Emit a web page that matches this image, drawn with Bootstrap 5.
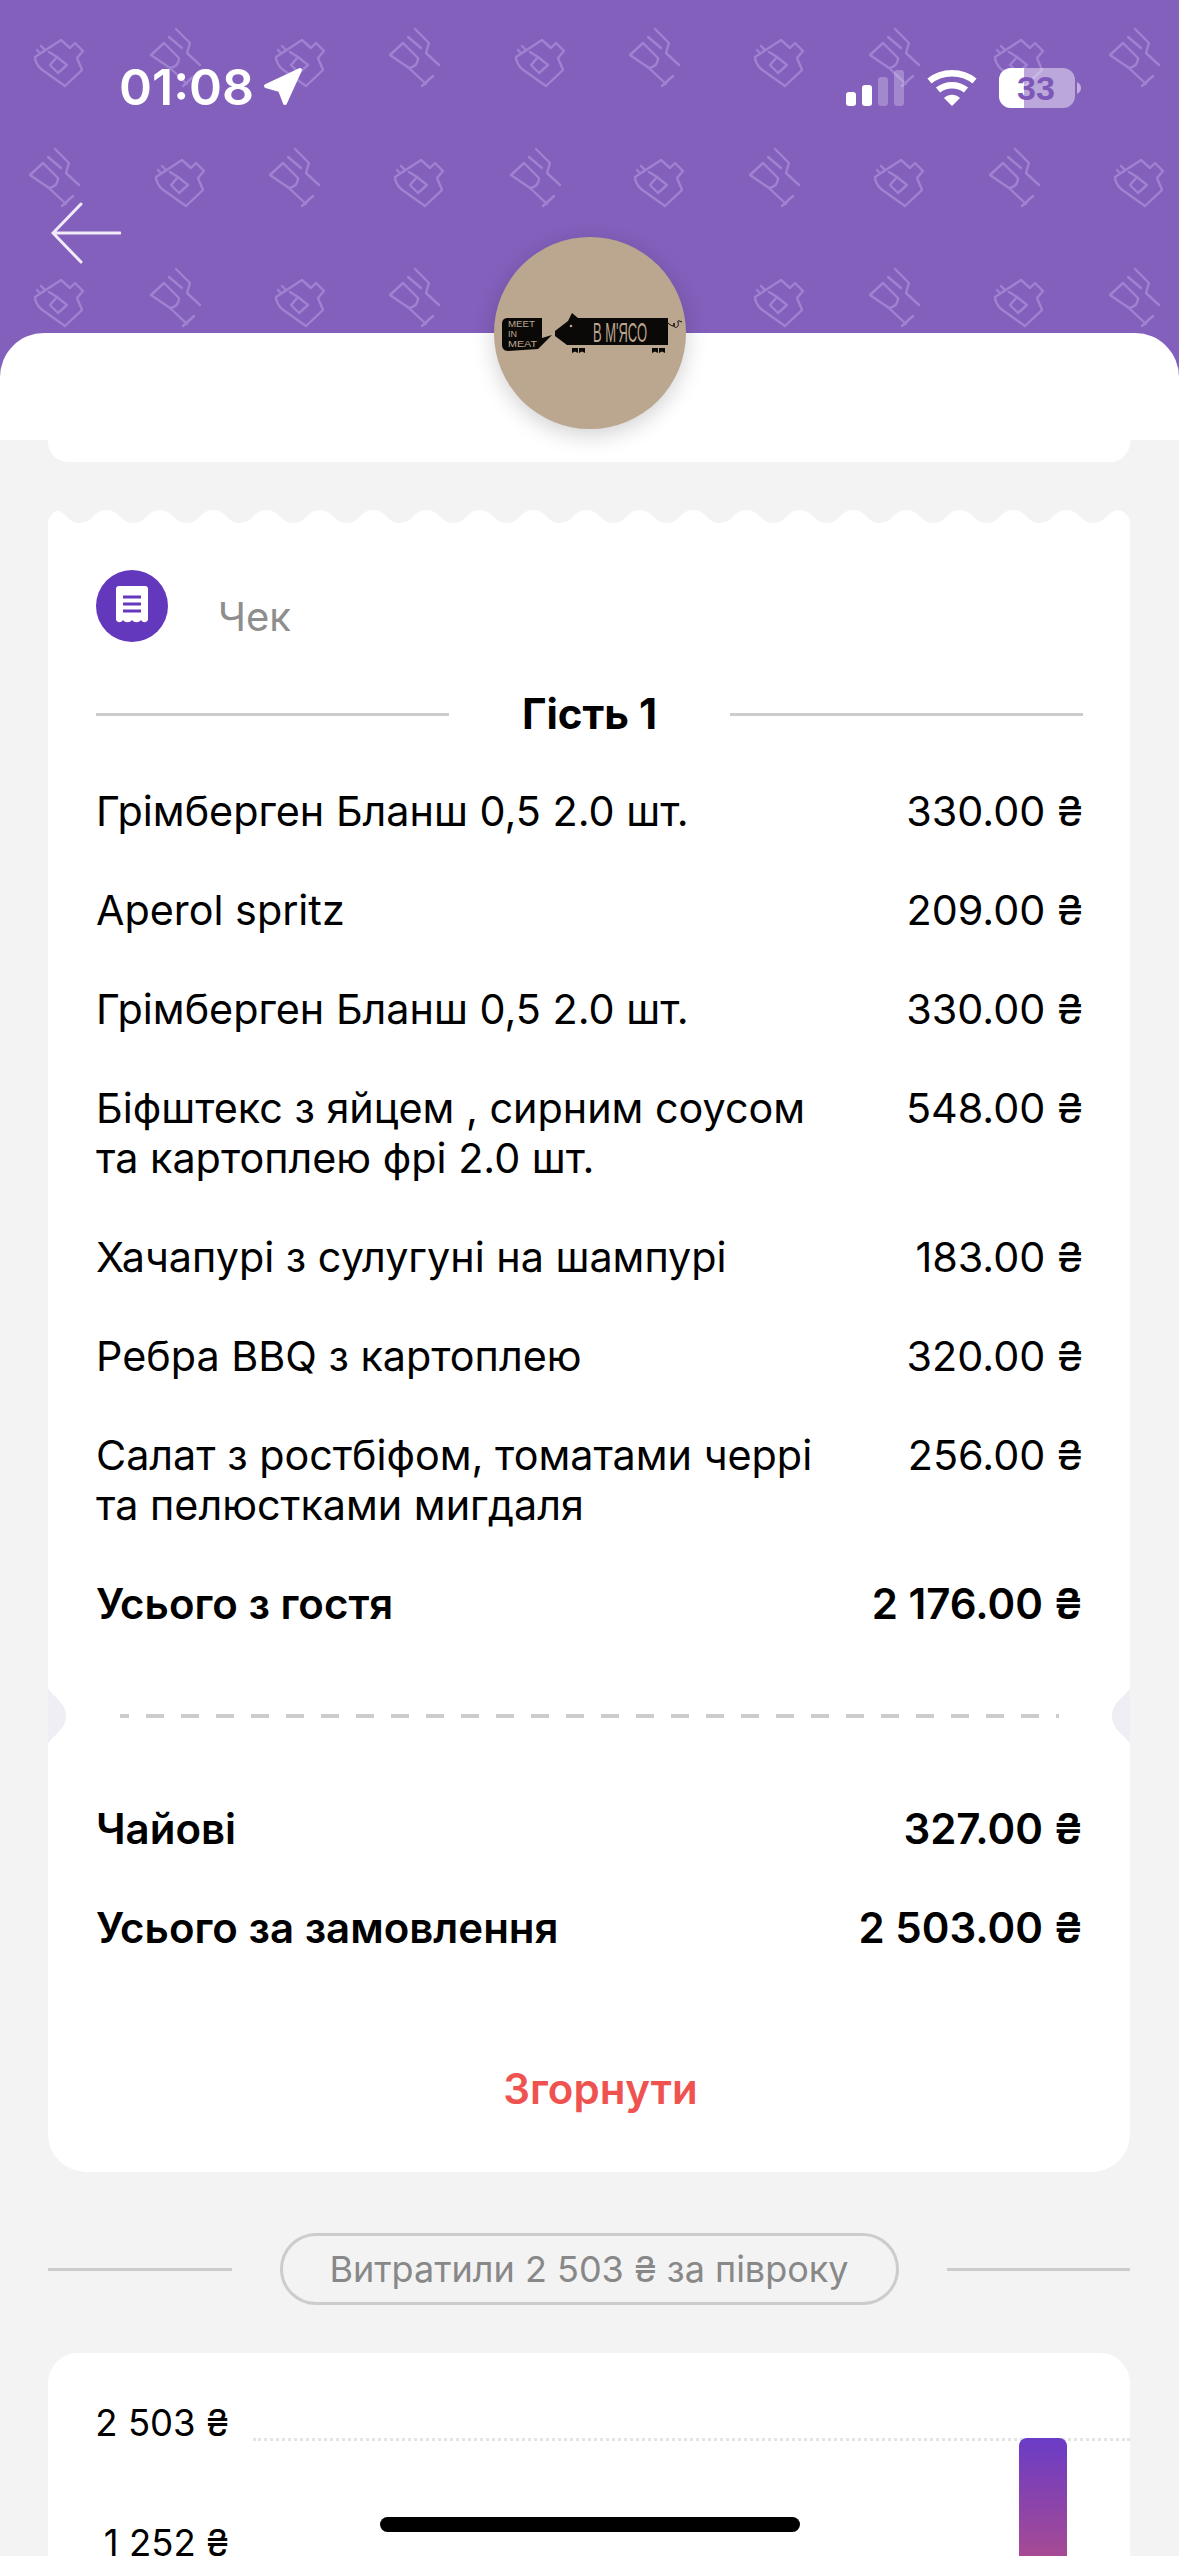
<!DOCTYPE html>
<html lang="uk">
<head>
  <meta charset="UTF-8">
  <title>Чек</title>
  <link href="https://cdn.jsdelivr.net/npm/bootstrap@5.3.0/dist/css/bootstrap.min.css" rel="stylesheet">
  <style>
    html, body { height: 2556px; overflow: hidden; }
    body { background: #f3f3f3; font-family: Inter, "Noto Sans", sans-serif; color: #000; font-size: 41.3px; line-height: 50px; }

    /* шапка */
    .hero { position: relative; height: 440px; background: #8360bc; }
    .hero-pattern { position: absolute; left: 0; top: 0; width: 1179px; height: 333px; }
    .status-bar { position: relative; padding: 67px 98px 0 119px; height: 110px; }
    .clock { font-size: 50px; line-height: 40px; font-weight: 600; color: #fff; }
    .wifi-icon { margin: 0 22px; }
    .back-link { position: relative; display: block; width: 70px; height: 62px; margin: 92px 0 0 51px; }
    .sheet { position: absolute; left: 0; right: 0; bottom: 0; height: 107px; background: #fff; border-radius: 44px 44px 0 0; }
    .brand-circle { position: absolute; left: 494px; top: 237px; width: 192px; height: 192px; border-radius: 50%; background: #bba68f; box-shadow: 0 6px 22px rgba(0,0,0,.18); }
    .stub { height: 22px; margin: 0 49px 48px 48px; background: #fff; border-radius: 0 0 20px 20px; }

    /* чек */
    .bill-card { position: relative; margin: 0 49px 0 48px; height: 1662px; padding: 60px 47px 0 48px; background: #fff; border-radius: 14px 14px 38px 38px; overflow: hidden; }
    .bill-waves { position: absolute; left: 0; top: 0; width: 100%; height: 14px; }
    .bill-icon { width: 72px; height: 72px; border-radius: 50%; background: #6338bd; }
    .bill-title { margin-left: 50px; font-size: 40px; color: #8e8e8e; }
    .guest-line { margin-top: 47px; margin-bottom: 47px; font-size: 42px; }
    .guest-line i { flex: 1; height: 3px; background: #ccc; }
    .guest-name { width: 281px; text-align: center; font-weight: 700; }
    .bill-row { margin-bottom: 49px; }
    .bill-name { width: 750px; }
    .bill-total { font-size: 42px; font-weight: 600; }
    .tear { position: relative; height: 4px; margin: 85px 24px 86px 24px; background: repeating-linear-gradient(90deg, #ccc 0 9px, transparent 9px 26px, #ccc 26px 35px); }
    .notch { position: absolute; top: -26px; width: 18px; height: 56px; }
    .notch-left { left: -72px; }
    .notch-right { right: -71px; transform: scaleX(-1); }
    .collapse-link { padding-left: 22px; margin-top: 111px; text-align: center; color: #ef5350; font-size: 42px; font-weight: 600; }

    /* витрати */
    .spent-line { margin: 61px 49px 48px 48px; }
    .spent-line i { flex: 1; height: 3px; background: #ccc; }
    .spent-pill { margin: 0 48px; width: 619px; height: 72px; line-height: 66px; border: 3px solid #ccc; border-radius: 36px; text-align: center; font-size: 36px; color: #888; }
    .chart-card { height: 300px; margin: 0 49px 0 48px; background: #fff; border-radius: 30px 30px 0 0; overflow: hidden; }
    .chart-labels { width: 181px; padding-top: 45px; font-size: 36.5px; text-align: right; }
    .chart-labels div { margin-bottom: 70px; }
    .chart-plot { margin: 85px 0 0 24px; border-top: 3px dotted #e4e4e4; padding-right: 63px; }
    .chart-bar { width: 48px; height: 260px; margin-top: -3px; border-radius: 8px 8px 0 0; background: linear-gradient(180deg, #6a3cc6 0, #a64a94 118px, #d85560 260px); }
    .home-bar { position: absolute; left: 380px; top: 2517px; width: 420px; height: 15px; border-radius: 8px; background: #000; }
  </style>
</head>
<body>
  <svg width="0" height="0" class="position-absolute">
    <defs>
      <symbol id="mugIcon" viewBox="-30 -30 60 60" overflow="visible">
        <path d="M2-23 11-15 16-20 24-12 18-5 23 7 6 23-18 6C-22 2-24-2-24-6Z" />
        <path d="M-2-6 8 2-1 10-9 2ZM-2-6-10-11M-22-13-19-10M-18-17-14-13" />
      </symbol>
      <symbol id="wineIcon" viewBox="-30 -30 60 60" overflow="visible">
        <path d="M-25-2-12-14 3 1C3 6 0 10-6 11ZM-6 11 11 27M18 19 7 29M-7-20 6-9M0-28 14-14 11-4 24 8" />
      </symbol>
    </defs>
  </svg>

  <div class="hero">
    <!-- візерунок -->
    <svg class="hero-pattern" viewBox="0 0 1179 333" fill="none" stroke="#9f82d0" stroke-width="2.400" stroke-linejoin="round" stroke-linecap="round">
      <use href="#mugIcon" x="29" y="33" width="60" height="60"/>
      <use href="#wineIcon" x="146" y="27" width="60" height="60"/>
      <use href="#mugIcon" x="270" y="33" width="60" height="60"/>
      <use href="#wineIcon" x="385" y="27" width="60" height="60"/>
      <use href="#mugIcon" x="510" y="33" width="60" height="60"/>
      <use href="#wineIcon" x="625" y="27" width="60" height="60"/>
      <use href="#mugIcon" x="749" y="33" width="60" height="60"/>
      <use href="#wineIcon" x="865" y="27" width="60" height="60"/>
      <use href="#mugIcon" x="989" y="33" width="60" height="60"/>
      <use href="#wineIcon" x="1105" y="27" width="60" height="60"/>

      <use href="#wineIcon" x="25" y="147" width="60" height="60"/>
      <use href="#mugIcon" x="150" y="153" width="60" height="60"/>
      <use href="#wineIcon" x="265" y="147" width="60" height="60"/>
      <use href="#mugIcon" x="389" y="153" width="60" height="60"/>
      <use href="#wineIcon" x="506" y="147" width="60" height="60"/>
      <use href="#mugIcon" x="629" y="153" width="60" height="60"/>
      <use href="#wineIcon" x="745" y="147" width="60" height="60"/>
      <use href="#mugIcon" x="869" y="153" width="60" height="60"/>
      <use href="#wineIcon" x="985" y="147" width="60" height="60"/>
      <use href="#mugIcon" x="1109" y="153" width="60" height="60"/>

      <use href="#mugIcon" x="29" y="273" width="60" height="60"/>
      <use href="#wineIcon" x="146" y="267" width="60" height="60"/>
      <use href="#mugIcon" x="270" y="273" width="60" height="60"/>
      <use href="#wineIcon" x="385" y="267" width="60" height="60"/>
      <use href="#mugIcon" x="749" y="273" width="60" height="60"/>
      <use href="#wineIcon" x="865" y="267" width="60" height="60"/>
      <use href="#mugIcon" x="989" y="273" width="60" height="60"/>
      <use href="#wineIcon" x="1105" y="267" width="60" height="60"/>
    </svg>

    <!-- рядок стану -->
    <div class="status-bar d-flex justify-content-between align-items-start">
      <div class="d-flex align-items-center gap-2">
        <span class="clock">01:08</span>
        <svg width="42" height="40" viewBox="0 0 42 40"><path d="M38 3 4 19 18 23 23 36Z" fill="#fff" stroke="#fff" stroke-width="4" stroke-linejoin="round"/></svg>
      </div>
      <div class="d-flex align-items-start">
        <svg width="60" height="40" viewBox="0 0 60 40">
          <rect x="1" y="25" width="10" height="14" rx="3" fill="#fff"/>
          <rect x="17" y="18" width="10" height="21" rx="3" fill="#fff"/>
          <rect x="33" y="10" width="10" height="29" rx="3" fill="#fff" fill-opacity=".25"/>
          <rect x="49" y="3" width="10" height="36" rx="3" fill="#fff" fill-opacity=".25"/>
        </svg>
        <svg class="wifi-icon" width="50" height="40" viewBox="0 0 50 40" fill="none" stroke="#fff" stroke-width="6.500">
          <path d="M2.500 14C15 3.500 35 3.500 47.500 14"/>
          <path d="M11 23C19 16.500 31 16.500 39 23"/>
          <path d="M17 31C22 26.800 28 26.800 33 31L25 39Z" fill="#fff" stroke="none"/>
        </svg>
        <svg width="82" height="42" viewBox="0 0 82 42">
          <rect x="0" y="1" width="76" height="40" rx="12" fill="#fff" fill-opacity=".45"/>
          <path d="M25 1H12A12 12 0 0 0 0 13V29A12 12 0 0 0 12 41H25Z" fill="#fff"/>
          <path d="M78 15C80 16 82 18 82 21S80 26 78 27Z" fill="#fff" fill-opacity=".5"/>
          <text x="37" y="33" text-anchor="middle" font-family="Liberation Sans, sans-serif" font-weight="700" font-size="34" fill="#7e58b9">33</text>
        </svg>
      </div>
    </div>

    <a class="back-link" href="#">
      <svg width="70" height="62" viewBox="0 0 70 62" fill="none" stroke="#f1eaf9" stroke-width="3" stroke-linecap="round"><path d="M2 31H69M30 2 2 31 30 60"/></svg>
    </a>

    <div class="sheet"></div>

    <div class="brand-circle">
      <svg width="192" height="192" viewBox="0 0 192 192">
        <path d="M14 81H48V101L58 98 44 112 14 114C10 114 8 111 8 108V87C8 83 10 81 14 81Z" fill="#0b0908"/>
        <g font-family="Liberation Sans, sans-serif" font-size="9" fill="#bba68f">
          <text x="14" y="90" textLength="27" lengthAdjust="spacingAndGlyphs">MEET</text>
          <text x="14" y="100">IN</text>
          <text x="14" y="110" textLength="29" lengthAdjust="spacingAndGlyphs">MEAT</text>
        </g>
        <path d="M61 94 74 84 78 76 84 81H174V108H73L61 99Z" fill="#0b0908"/>
        <circle cx="77" cy="89" r="1.300" fill="#bba68f"/>
        <text x="99" y="105" textLength="54" lengthAdjust="spacingAndGlyphs" font-family="Liberation Sans, sans-serif" font-size="28" fill="#bba68f">В М'ЯСО</text>
        <path d="M78 111h6v5l-3-1.500-3 1.500ZM85 111h6v5l-3-1.500-3 1.500ZM158 111h6v5l-3-1.500-3 1.500ZM165 111h6v5l-3-1.500-3 1.500Z" fill="#0b0908"/>
        <path d="M174 86C178 90 182 90 180 86 178 92 186 92 184 85 183 83 186 84 188 85" fill="none" stroke="#0b0908" stroke-width="1"/>
      </svg>
    </div>
  </div>

  <div class="stub"></div>

  <!-- чек -->
  <div class="bill-card">
    <svg class="bill-waves">
      <defs>
        <pattern id="wavePattern" x="5.400" y="0" width="53.330" height="14" patternUnits="userSpaceOnUse">
          <path d="M0 0C13 0 13 13 26.670 13 40 13 40 0 53.330 0Z" fill="#f3f3f3"/>
        </pattern>
      </defs>
      <rect width="100%" height="14" fill="url(#wavePattern)"/>
    </svg>

    <div class="d-flex align-items-end">
      <div class="bill-icon">
        <svg width="72" height="72" viewBox="0 0 72 72">
          <path d="M23 16H49A3 3 0 0 1 52 19V50C50 53 47 53 45 50 43 53 38 53 36 50 34 53 29 53 27 50 25 53 22 53 20 50V19A3 3 0 0 1 23 16Z" fill="#fff"/>
          <path d="M27 27H45M27 34H45M27 41H45" stroke="#6338bd" stroke-width="3"/>
        </svg>
      </div>
      <div class="bill-title">Чек</div>
    </div>

    <div class="guest-line d-flex align-items-center">
      <i></i>
      <div class="guest-name">Гість 1</div>
      <i></i>
    </div>

    <div class="bill-row d-flex justify-content-between"><div class="bill-name">Грімберген Бланш 0,5 2.0 шт.</div><div>330.00 ₴</div></div>
    <div class="bill-row d-flex justify-content-between"><div class="bill-name">Aperol spritz</div><div>209.00 ₴</div></div>
    <div class="bill-row d-flex justify-content-between"><div class="bill-name">Грімберген Бланш 0,5 2.0 шт.</div><div>330.00 ₴</div></div>
    <div class="bill-row d-flex justify-content-between"><div class="bill-name">Біфштекс з яйцем , сирним соусом та картоплею фрі 2.0 шт.</div><div>548.00 ₴</div></div>
    <div class="bill-row d-flex justify-content-between"><div class="bill-name">Хачапурі з сулугуні на шампурі</div><div>183.00 ₴</div></div>
    <div class="bill-row d-flex justify-content-between"><div class="bill-name">Ребра BBQ з картоплею</div><div>320.00 ₴</div></div>
    <div class="bill-row d-flex justify-content-between"><div class="bill-name">Салат з ростбіфом, томатами черрі та пелюстками мигдаля</div><div>256.00 ₴</div></div>
    <div class="bill-total d-flex justify-content-between"><div>Усього з гостя</div><div>2 176.00 ₴</div></div>

    <div class="tear">
      <svg class="notch notch-left" viewBox="0 0 18 56"><path d="M0 0C4 8 18 14 18 28S4 48 0 56Z" fill="#eeeef4"/></svg>
      <svg class="notch notch-right" viewBox="0 0 18 56"><path d="M0 0C4 8 18 14 18 28S4 48 0 56Z" fill="#eeeef4"/></svg>
    </div>

    <div class="bill-row bill-total d-flex justify-content-between"><div>Чайові</div><div>327.00 ₴</div></div>
    <div class="bill-total d-flex justify-content-between"><div>Усього за замовлення</div><div>2 503.00 ₴</div></div>

    <div class="collapse-link">Згорнути</div>
  </div>

  <div class="spent-line d-flex align-items-center">
    <i></i>
    <div class="spent-pill">Витратили 2 503 ₴ за півроку</div>
    <i></i>
  </div>

  <div class="chart-card d-flex">
    <div class="chart-labels flex-shrink-0">
      <div>2 503 ₴</div>
      <div>1 252 ₴</div>
    </div>
    <div class="chart-plot flex-grow-1 d-flex justify-content-end">
      <div class="chart-bar"></div>
    </div>
  </div>

  <div class="home-bar"></div>

  <script src="https://cdn.jsdelivr.net/npm/bootstrap@5.3.0/dist/js/bootstrap.bundle.min.js"></script>
</body>
</html>
